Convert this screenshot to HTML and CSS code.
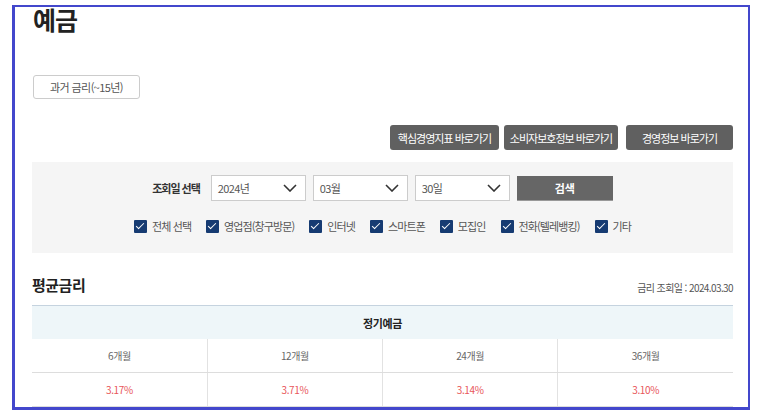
FILE: index.html
```html
<!DOCTYPE html>
<html lang="ko">
<head>
    <meta charset="UTF-8">
    <meta name="viewport" content="width=device-width, initial-scale=1.0">
    <title>예금 금리</title>
    <link rel="stylesheet" href="styles.css">
</head>
<body>

  <div class="frame">
    <h1 class="page-title">예금</h1>

    <button class="past-btn">과거 금리(~15년)</button>

    <div class="link-buttons">
      <button class="dark-btn w1">핵심경영지표 바로가기</button>
      <button class="dark-btn w2">소비자보호정보 바로가기</button>
      <button class="dark-btn w3">경영정보 바로가기</button>
    </div>

    <!-- 조회 조건 -->
    <div class="search-box">
      <div class="search-row">
        <span class="search-label">조회일 선택</span>
        <div class="select-box">2024년
          <svg viewBox="0 0 14 8" width="14" height="8"><path d="M1 1l6 6 6-6" fill="none" stroke="#333" stroke-width="1.6"/></svg>
        </div>
        <div class="select-box">03월
          <svg viewBox="0 0 14 8" width="14" height="8"><path d="M1 1l6 6 6-6" fill="none" stroke="#333" stroke-width="1.6"/></svg>
        </div>
        <div class="select-box">30일
          <svg viewBox="0 0 14 8" width="14" height="8"><path d="M1 1l6 6 6-6" fill="none" stroke="#333" stroke-width="1.6"/></svg>
        </div>
        <button class="search-btn">검색</button>
      </div>
      <div class="check-row">
        <label class="check"><span class="box"></span>전체 선택</label>
        <label class="check"><span class="box"></span>영업점(창구방문)</label>
        <label class="check"><span class="box"></span>인터넷</label>
        <label class="check"><span class="box"></span>스마트폰</label>
        <label class="check"><span class="box"></span>모집인</label>
        <label class="check"><span class="box"></span>전화(텔레뱅킹)</label>
        <label class="check"><span class="box"></span>기타</label>
      </div>
    </div>

    <div class="section-head">
      <h2>평균금리</h2>
      <span class="date">금리 조회일 : 2024.03.30</span>
    </div>

    <table class="rate-table">
      <tr><th colspan="4">정기예금</th></tr>
      <tr class="terms">
        <td>6개월</td><td>12개월</td><td>24개월</td><td>36개월</td>
      </tr>
      <tr class="rates">
        <td>3.17%</td><td>3.71%</td><td>3.14%</td><td>3.10%</td>
      </tr>
    </table>
  </div>

</body>
</html>
```

FILE: styles.css
```css
body {
  margin: 0;
  background-color: #fff;
  font-family: "Noto Sans CJK KR", "Noto Sans", sans-serif;
  color: #333;
}

.frame {
  margin: 5px 0 0 12px;
  width: 738px;
  height: 405px;
  box-sizing: border-box;
  border-style: solid;
  border-color: #4347cc;
  border-width: 2px 2px 3px 3px;
  padding: 0 15px 0 17px;
}

.page-title {
  margin: -2px 0 0 1px;
  font-size: 25px;
  line-height: 28px;
  font-weight: 700;
  color: #222;
  letter-spacing: -1px;
}

.past-btn {
  display: block;
  margin: 42px 0 0 1px;
  width: 107px;
  height: 24px;
  padding: 0;
  background: #fff;
  border: 1px solid #ccc;
  border-radius: 3px;
  font-family: inherit;
  font-size: 11px;
  color: #555;
  letter-spacing: -0.6px;
}

.link-buttons {
  display: flex;
  justify-content: flex-end;
  gap: 5px;
  margin-top: 26px;
}

.dark-btn {
  height: 25px;
  padding: 0;
  background: #606060;
  border: none;
  border-radius: 3px;
  color: #fff;
  font-family: inherit;
  font-size: 11px;
  letter-spacing: -1px;
}

.dark-btn.w1 { width: 109px; }
.dark-btn.w2 { width: 114px; }
.dark-btn.w3 { width: 107px; margin-left: 3px; }

.search-box {
  margin-top: 12px;
  height: 91px;
  box-sizing: border-box;
  padding-top: 13px;
  background: #f5f5f5;
}

.search-row {
  display: flex;
  justify-content: center;
  align-items: center;
  gap: 7px;
}

.search-label {
  margin-right: 4px;
  font-size: 11px;
  font-weight: 700;
  color: #333;
  letter-spacing: -1px;
}

.select-box {
  display: flex;
  justify-content: space-between;
  align-items: center;
  width: 95px;
  height: 26px;
  box-sizing: border-box;
  padding: 0 8px 0 6px;
  background: #fff;
  border: 1px solid #ccc;
  font-size: 11px;
  color: #555;
  letter-spacing: -0.6px;
}

.search-btn {
  width: 96px;
  height: 25px;
  background: #666;
  border: none;
  border-bottom: 1px solid #999;
  color: #fff;
  font-family: inherit;
  font-size: 11px;
  font-weight: 700;
}

.check-row {
  display: flex;
  justify-content: center;
  gap: 15px;
  margin-top: 17px;
}

.check {
  display: flex;
  align-items: center;
  gap: 5px;
  font-size: 11px;
  color: #555;
  letter-spacing: -0.9px;
}

.check .box {
  position: relative;
  width: 13px;
  height: 13px;
  background: #163b72;
  border-radius: 1px;
}

.check .box::after {
  content: "";
  position: absolute;
  left: 4px;
  top: 1px;
  width: 3px;
  height: 7px;
  border: solid #fff;
  border-width: 0 1.5px 1.5px 0;
  transform: rotate(45deg);
}

.section-head {
  display: flex;
  justify-content: space-between;
  align-items: flex-end;
  margin-top: 22px;
}

.section-head h2 {
  margin: 0;
  font-size: 15px;
  line-height: 20px;
  font-weight: 700;
  color: #222;
  letter-spacing: -0.5px;
}

.section-head .date {
  font-size: 10px;
  color: #555;
  letter-spacing: -0.6px;
}

.rate-table {
  width: 100%;
  margin-top: 10px;
  border-collapse: collapse;
  table-layout: fixed;
  font-size: 10px;
  text-align: center;
  letter-spacing: -0.4px;
}

.rate-table th {
  height: 33px;
  padding: 0;
  background: #eef6f9;
  border-top: 1px solid #c5d3df;
  font-size: 11px;
  font-weight: 700;
  color: #222;
}

.rate-table td {
  height: 33px;
  padding: 0;
  border-bottom: 1px solid #ddd;
  border-left: 1px solid #e2e2e2;
}

.rate-table td:first-child {
  border-left: none;
}

.terms td {
  color: #666;
}

.rates td {
  color: #e8565a;
}
```
